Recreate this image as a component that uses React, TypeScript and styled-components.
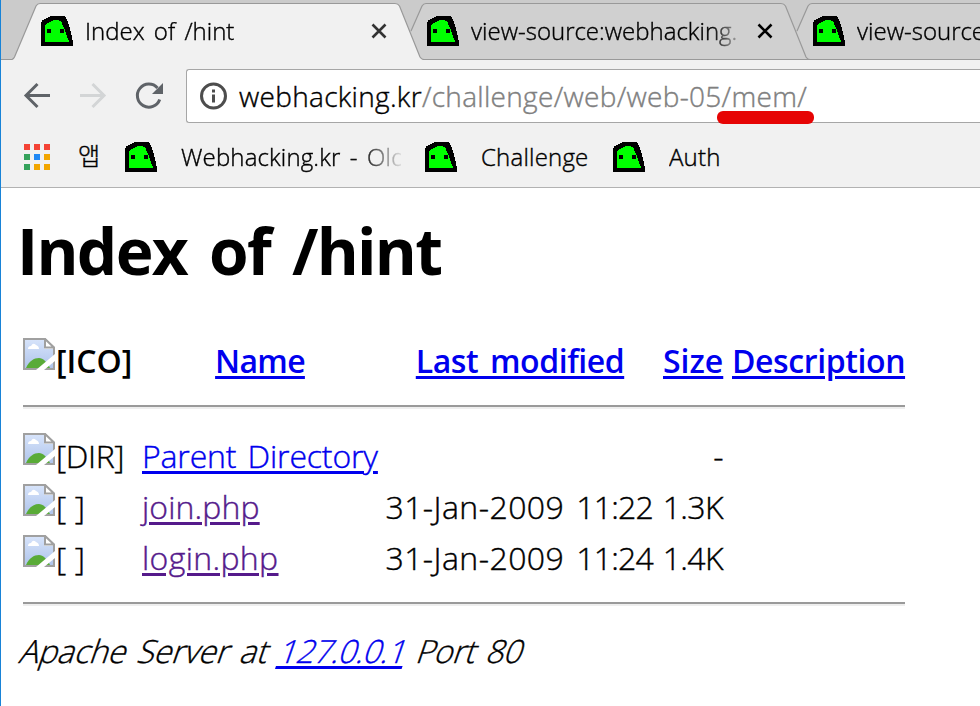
import React from "react";
import styled, { createGlobalStyle } from "styled-components";

const Global = createGlobalStyle`
  * { box-sizing: border-box; }
  body { margin: 0; background: #fff; }
`;

const Window = styled.div`
  width: 980px;
  height: 706px;
  overflow: hidden;
  display: flex;
  flex-direction: column;
  border-left: 1px solid #1883d7;
  background: #fff;
  color: #000;
  font-family: "Open Sans", "Noto Sans", "Noto Sans CJK KR", sans-serif;
  font-weight: 300;
  -webkit-text-stroke: 0.4px currentColor;
  white-space: nowrap;
`;

const Label = styled.span<{ $ls?: number; $ws?: number }>`
  letter-spacing: ${(p) => p.$ls ?? 0}px;
  word-spacing: ${(p) => p.$ws ?? 0}px;
`;

/* tab strip */
const TabStrip = styled.div`
  display: flex;
  flex: none;
  height: 60px;
  padding-left: 11px;
  background: linear-gradient(#999, #999) 0 59px / 100% 1px no-repeat #cbcbcb;
  overflow: hidden;
`;

const Tab = styled.div<{ $level: number }>`
  position: relative;
  z-index: ${(p) => p.$level};
  flex: none;
  display: flex;
  align-items: center;
  width: 386px;
  height: 60px;
  padding: 2px 0 0 29px;
  font-size: 24px;
`;

const TabShape = styled.svg`
  position: absolute;
  left: 0;
  top: 0;
`;

const TabTitle = styled.div`
  position: relative;
  width: 268px;
  margin-left: 12px;
  line-height: 36px;
  overflow: hidden;
  mask-image: linear-gradient(to right, #000 240px, transparent 275px);
`;

const TabClose = styled.svg`
  position: relative;
  margin-left: 18px;
`;

const Favicon = styled.svg`
  position: relative;
  flex: none;
`;

/* toolbar */
const Toolbar = styled.div`
  display: flex;
  flex: none;
  height: 63px;
  padding-top: 9px;
  background: #f1f1f1;
`;

const NavButtons = styled.div`
  display: flex;
  width: 185px;
  flex: none;
  padding: 13px 0 0 21px;
  gap: 24px;
`;

const Omnibox = styled.div`
  flex: 1;
  display: flex;
  align-items: center;
  height: 54px;
  padding-left: 12px;
  gap: 12px;
  background: #fff;
  border: 1px solid #a6a6a6;
  border-right: 0;
  border-radius: 3px 0 0 3px;
  font-size: 28px;
  line-height: 40px;
`;

const UrlPath = styled.span`
  color: #808080;
`;

const Marked = styled.span`
  position: relative;
  &::after {
    content: "";
    position: absolute;
    left: -5px;
    right: -7px;
    top: 34px;
    height: 13px;
    border-radius: 6px;
    background: #e60404;
  }
`;

/* bookmarks */
const Bookmarks = styled.div`
  display: flex;
  flex: none;
  align-items: center;
  height: 65px;
  padding: 4px 0 0 23px;
  background: #f1f1f1;
  border-bottom: 1px solid #b2b2b2;
  font-size: 24px;
  line-height: 36px;
`;

const AppGrid = styled.div`
  display: grid;
  grid-template-columns: repeat(3, 6px);
  gap: 4px;
`;

const Dot = styled.i<{ $color: string }>`
  height: 6px;
  background: ${(p) => p.$color};
`;

const AppsLabel = styled.div`
  width: 45px;
  margin: -5px 2px 0 28px;
  font-family: "Noto Sans CJK KR", sans-serif;
  font-size: 24px;
  font-weight: 300;
`;

const Bookmark = styled.div<{ $width: number; $fade?: boolean }>`
  width: ${(p) => p.$width}px;
  margin-left: 24px;
  margin-right: 24px;
  overflow: hidden;
  ${(p) => p.$fade && "mask-image: linear-gradient(to right, #000 180px, transparent 224px);"}
`;

/* directory listing */
const Page = styled.main`
  padding: 21px 0 0 18px;
  font-size: 32px;
  line-height: 51px;
`;

const Title = styled.h1`
  margin: 0 0 44px -2px;
  padding-top: 2px;
  font-size: 64px;
  line-height: 80px;
  font-weight: 700;
  -webkit-text-stroke: 0;
`;

const Listing = styled.div`
  width: 882px;
  margin-left: 4px;
`;

const Row = styled.div<{ $head?: boolean }>`
  display: grid;
  grid-template-columns: 119px 236px 9px 266px 10px 60px 9px 173px;
  height: 51px;
  font-weight: ${(p) => (p.$head ? 650 : 300)};
  ${(p) => p.$head && "-webkit-text-stroke: 0;"}
`;

const Cell = styled.div<{ $col: number; $align?: string }>`
  grid-column: ${(p) => p.$col};
  display: flex;
  justify-content: ${(p) => p.$align ?? "flex-start"};
`;

const Rule = styled.hr`
  height: 4px;
  margin: 19px 0 21px;
  border: 0;
  border-top: 2px solid #9a9a9a;
  background: #eee;
`;

const Link = styled.a<{ $visited?: boolean }>`
  color: ${(p) => (p.$visited ? "#551a8b" : "#0000ee")};
  text-decoration: underline;
  text-decoration-thickness: 3px;
  text-underline-offset: 3px;
`;

const IconCell = styled(Cell)`
  align-items: flex-start;
  svg { margin-top: 3px; flex: none; }
  span { margin-left: 1px; }
`;

const DateCell = styled(Cell)`
  gap: 12px;
`;

const Address = styled.address`
  margin: -2px 0 0 -1px;
  font-style: normal;
  transform: skewX(-19deg);
  transform-origin: 0 38px;
`;

const Ghost = () => (
  <Favicon width="32" height="30" shapeRendering="crispEdges">
    <path d="M0 30V6H1V4H3V3H5V2H7V1H9V0H24V1H25V3H26V5H27V8H28V11H29V15H30V19H31V24H32V30Z" fill="#000" />
    <path d="M4 26V9H5V8H6V7H8V6H10V5H12V4H18V5H20V6H21V9H22V11H23V13H24V16H25V19H26V22H27V24H28V26Z" fill="#0f0" />
    <path d="M6 13h4v4H6zM19 13h4v4h-4z" fill="#000" />
  </Favicon>
);

const Broken = () => (
  <svg width="32" height="32" viewBox="0 0 32 32">
    <defs>
      <linearGradient id="sky" x1="0" y1="0" x2="0" y2="1">
        <stop offset="0" stopColor="#d6e3fa" />
        <stop offset="1" stopColor="#afc4eb" />
      </linearGradient>
    </defs>
    <path d="M1 1H22L31 10V31H1Z" fill="#fff" stroke="#a0a0a0" strokeWidth="2" />
    <path d="M2 2H21V11H30V30H2Z" fill="url(#sky)" />
    <path d="M5 11q0-3 3-3q2-4 5-1q3 1 3 4z" fill="#fff" />
    <path d="M3 30C6 23 11 20 16 20c4 0 8 4 11 10z" fill="#59ab37" />
    <path d="M22 1V9.500H31Z" fill="#fff" stroke="#a0a0a0" strokeWidth="2" />
    <path d="M13 32L32 16V23L21 32Z" fill="#fff" />
  </svg>
);

const Close = ({ color }: { color: string }) => (
  <TabClose width="16" height="16" viewBox="0 0 16 16">
    <path d="M1.5 1.5L14.5 14.5M14.5 1.5L1.5 14.5" stroke={color} strokeWidth="2.6" />
  </TabClose>
);

const EDGE = "M0 59.5Q1.5 59 2.5 57L24 6Q25.5 3.5 28 3.5H383Q386 3.5 387.5 6L408 57Q409.5 59.5 412 59.5";
const TUCKED_EDGE = "M13 31L24 6Q25.5 3.5 28 3.5H383Q386 3.5 387.5 6L408 57Q409.5 59.5 412 59.5H0";

type TabProps = { title: string; level: number; active?: boolean; ws?: number };

const BrowserTab = ({ title, level, active, ws }: TabProps) => (
  <Tab $level={level}>
    <TabShape width="412" height="60">
      <path d={EDGE + "V60H0Z"} fill={active ? "#f1f1f1" : "#d0d0d0"} />
      <path d={active ? EDGE : TUCKED_EDGE} fill="none" stroke="#999" strokeWidth="1.2" />
    </TabShape>
    <Ghost />
    <TabTitle>
      <Label $ws={ws}>{title}</Label>
    </TabTitle>
    <Close color={active ? "#333" : "#000"} />
  </Tab>
);

const DOTS = ["#f44336", "#f44336", "#f44336", "#34a25b", "#2088f4", "#f2a600", "#34a25b", "#f2a600", "#f2a600"];

const FILES = [
  { alt: "[DIR]", name: "Parent Directory", ls: -0.15, day: "", time: "", size: "-", visited: false },
  { alt: "[ ]", name: "join.php", ls: 0.12, day: "31-Jan-2009", time: "11:22", size: "1.3K", visited: true },
  { alt: "[ ]", name: "login.php", ls: 0.35, day: "31-Jan-2009", time: "11:24", size: "1.4K", visited: true },
];

export default function App() {
  return (
    <>
      <Global />
      <Window>
        <TabStrip>
          <BrowserTab title="Index of /hint" level={3} active ws={3} />
          <BrowserTab title="view-source:webhacking.kr" level={2} />
          <BrowserTab title="view-source:webhacking.kr" level={1} />
        </TabStrip>
        <Toolbar>
          <NavButtons>
            <svg width="32" height="28" fill="none" stroke="#5f6368" strokeWidth="3">
              <path d="M28 13.5H4M15.5 2L4 13.5L15.5 25" />
            </svg>
            <svg width="32" height="28" fill="none" stroke="#d3d5d6" strokeWidth="3">
              <path d="M2 13.5H26M14.5 2L26 13.5L14.5 25" />
            </svg>
            <svg width="32" height="28" fill="none" stroke="#5f6368" strokeWidth="3">
              <path d="M25.7 17.5A11.5 11.5 0 1 1 23.5 6" />
              <path d="M29 1V12H18Z" fill="#5f6368" stroke="none" />
            </svg>
          </NavButtons>
          <Omnibox>
            <svg width="28" height="28" fill="none" stroke="#4d4d4d" strokeWidth="3">
              <circle cx="14.5" cy="14" r="12" />
              <path d="M14.5 7.5v3M14.5 12.5v8" />
            </svg>
            <div>
              <Label $ls={0.3}>webhacking.kr</Label>
              <UrlPath>
                <Label $ls={0.3}>/challenge/web/web-05</Label>
                <Marked>
                  <Label $ls={0.35}>/mem/</Label>
                </Marked>
              </UrlPath>
            </div>
          </Omnibox>
        </Toolbar>
        <Bookmarks>
          <AppGrid>
            {DOTS.map((c, i) => (
              <Dot key={i} $color={c} />
            ))}
          </AppGrid>
          <AppsLabel>앱</AppsLabel>
          <Ghost />
          <Bookmark $width={220} $fade>
            <Label $ls={0.15} $ws={3}>Webhacking.kr - Old</Label>
          </Bookmark>
          <Ghost />
          <Bookmark $width={108}>
            <Label $ls={0.2}>Challenge</Label>
          </Bookmark>
          <Ghost />
          <Bookmark $width={80}>
            <Label $ls={0.2}>Auth</Label>
          </Bookmark>
        </Bookmarks>
        <Page>
          <Title>
            <Label $ls={-1.7} $ws={7}>Index of /hint</Label>
          </Title>
          <Listing>
            <Row $head>
              <IconCell $col={1}>
                <Broken />
                <Label>[ICO]</Label>
              </IconCell>
              <Cell $col={2} $align="center">
                <Link><Label $ls={-0.7}>Name</Label></Link>
              </Cell>
              <Cell $col={4} $align="center">
                <Link><Label $ls={-0.45} $ws={4}>Last modified</Label></Link>
              </Cell>
              <Cell $col={6}>
                <Link><Label>Size</Label></Link>
              </Cell>
              <Cell $col={8}>
                <Link><Label $ls={-0.4}>Description</Label></Link>
              </Cell>
            </Row>
            <Rule />
            {FILES.map((f) => (
              <Row key={f.name}>
                <IconCell $col={1}>
                  <Broken />
                  <Label $ls={-0.4} $ws={1}>{f.alt}</Label>
                </IconCell>
                <Cell $col={2}>
                  <Link $visited={f.visited}><Label $ls={f.ls} $ws={3}>{f.name}</Label></Link>
                </Cell>
                <DateCell $col={4} $align="flex-end">
                  <Label $ls={0.45}>{f.day}</Label>
                  <Label $ls={-0.8}>{f.time}</Label>
                </DateCell>
                <Cell $col={6} $align="flex-end">
                  <Label $ls={-0.6}>{f.size}</Label>
                </Cell>
              </Row>
            ))}
            <Rule />
          </Listing>
          <Address>
            <Label $ls={-0.1} $ws={3}>Apache Server at </Label>
            <Link><Label $ls={-0.65}>127.0.0.1</Label></Link>
            <Label $ls={-0.4} $ws={3}> Port 80</Label>
          </Address>
        </Page>
      </Window>
    </>
  );
}
